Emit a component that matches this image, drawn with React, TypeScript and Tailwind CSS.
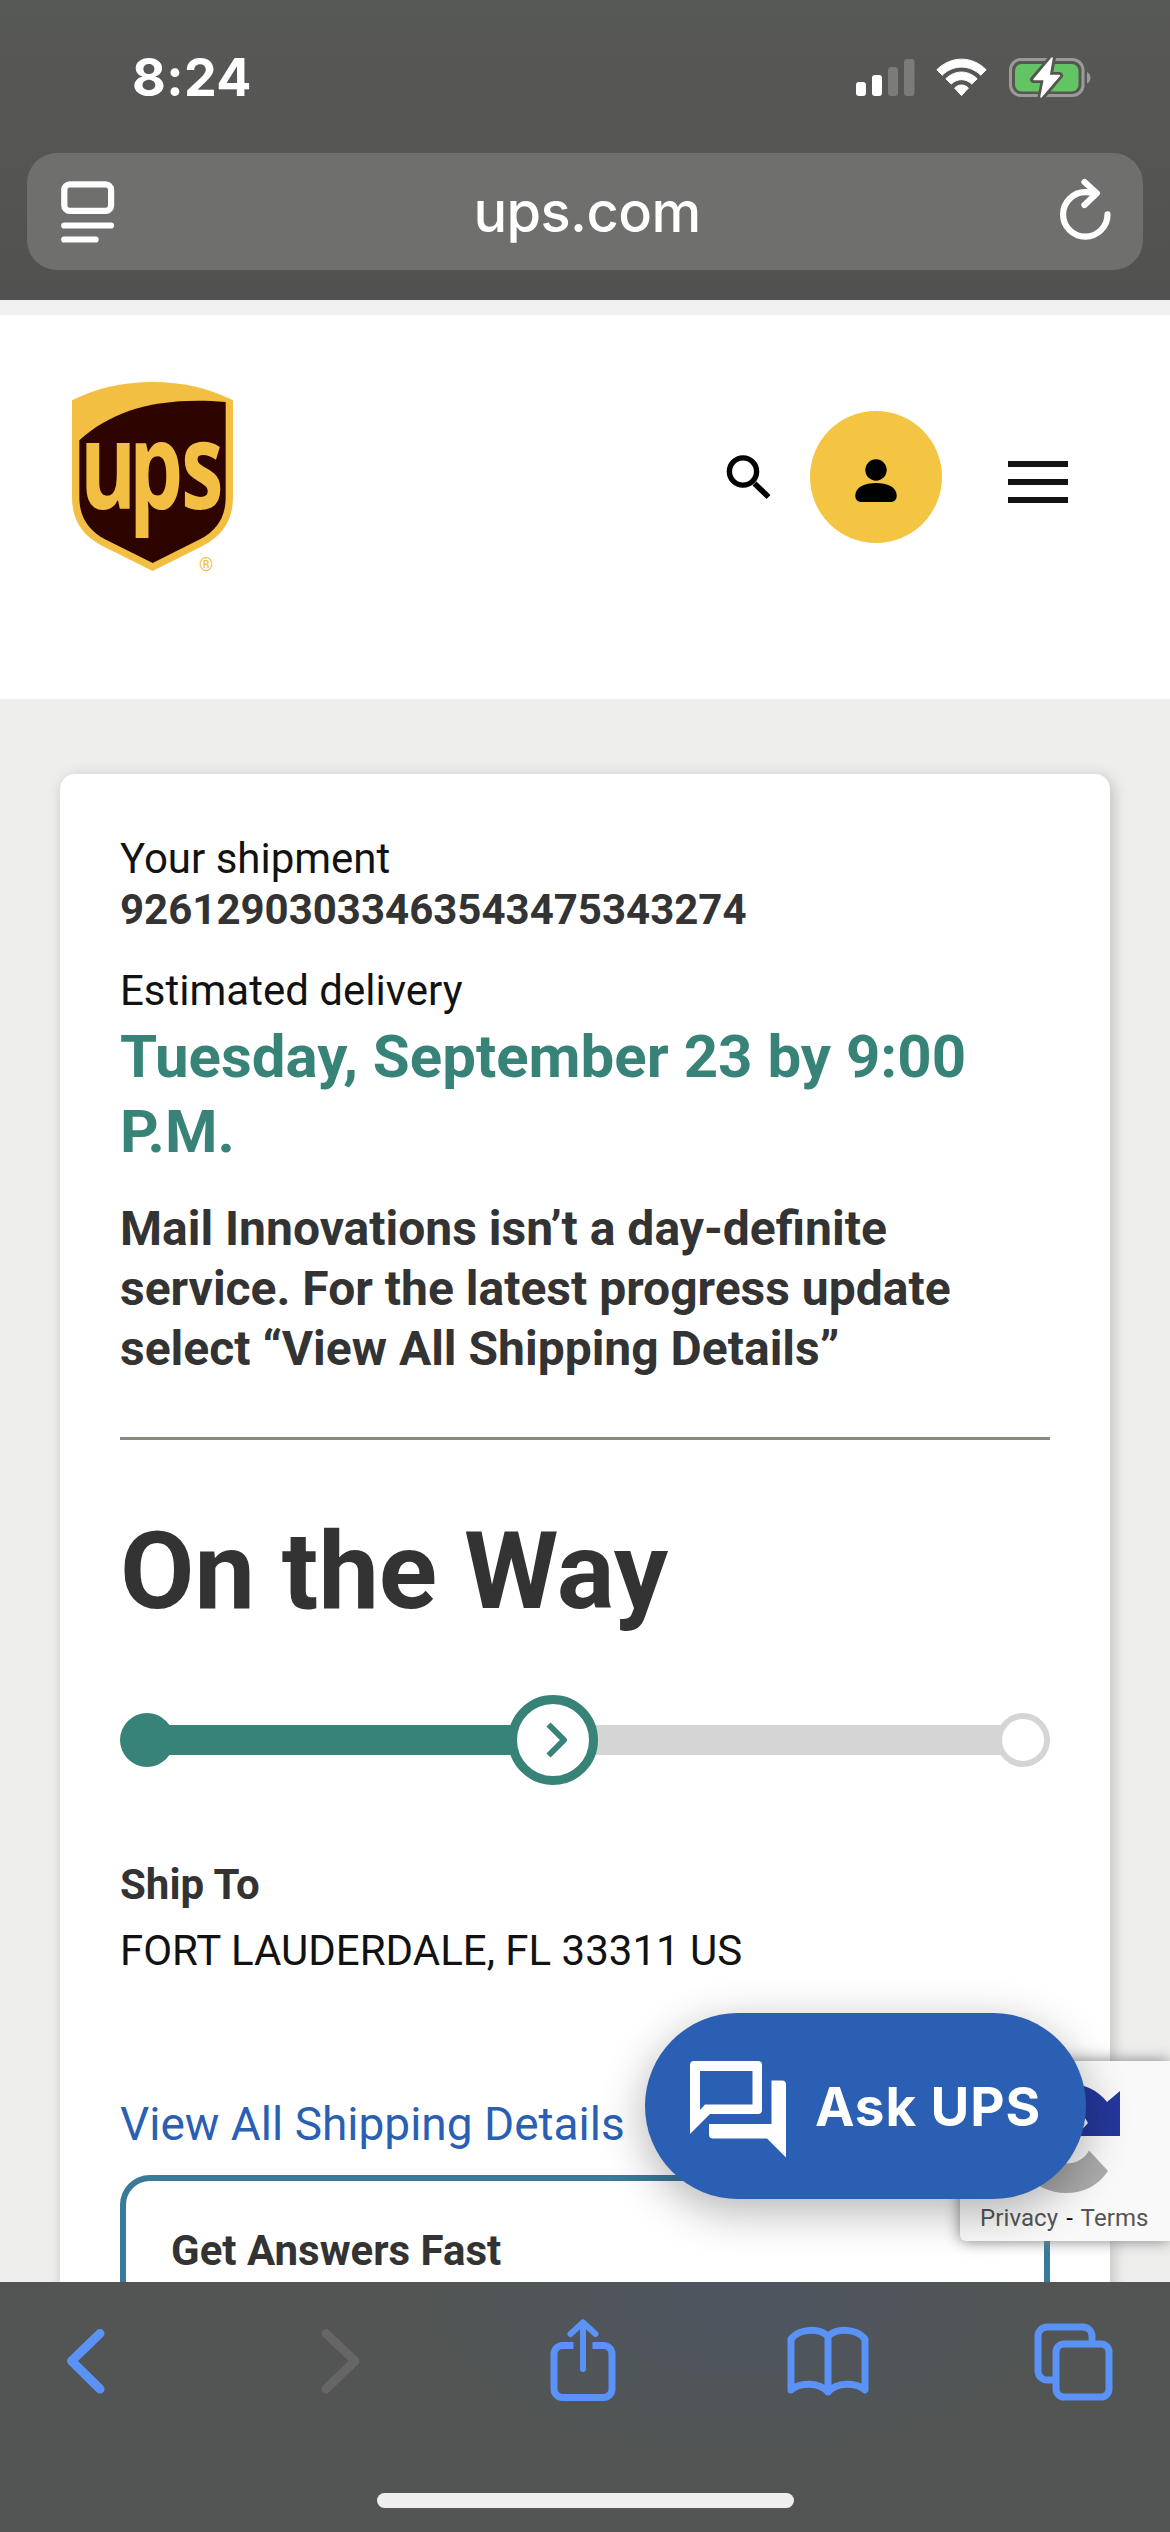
import type { ReactNode } from 'react';

/**
 * Cellular, wifi and battery indicators
 */
function StatusIcons() {
  return (
    <svg className="h-[44px] w-[236px]" viewBox="856 56 236 44" fill="none">
      <rect x="856" y="82" width="10" height="14" rx="3" fill="#fff" />
      <rect x="872" y="75" width="10" height="21" rx="3" fill="#fff" />
      <rect x="888" y="67" width="10" height="29" rx="3" fill="#7b7b7a" />
      <rect x="904" y="59" width="10.5" height="37" rx="3" fill="#7b7b7a" />

      <path d="M936.8 69.8C951 55.6 972.2 55.6 986.2 69.8L980.8 75.2C969.6 64.4 953.4 64.4 942.2 75.2Z" fill="#fff" stroke="#fff" strokeWidth="1" strokeLinejoin="round" />
      <path d="M945.8 78.8C955 69.8 968 69.8 977.2 78.8L971.8 84C965.6 78.2 957.4 78.2 951.2 84Z" fill="#fff" stroke="#fff" strokeWidth="1" strokeLinejoin="round" />
      <path d="M954.6 88C958.6 84 964.4 84 968.4 88L961.5 95.6Z" fill="#fff" stroke="#fff" strokeWidth="1" strokeLinejoin="round" />

      <rect x="1010.5" y="59.5" width="72.5" height="36" rx="10.5" stroke="#9b9a99" strokeWidth="3" />
      <rect x="1015" y="64" width="63.5" height="27.5" rx="6.5" fill="#62c462" />
      <path d="M1087 72a6.5 6.5 0 0 1 0 11.5z" fill="#9b9a99" />
      <path d="M1052.5 57.5L1033.5 79.5H1044.5L1041 97.5L1059.5 75.5H1049Z" fill="#fff" stroke="#555553" strokeWidth="7" strokeLinejoin="round" />
      <path d="M1052 58L1034 79.5H1044.5L1041 97L1059.5 75.5H1049Z" fill="#fff" stroke="#fff" strokeWidth="1.5" strokeLinejoin="round" />
    </svg>
  );
}

function BrowserHeader() {
  return (
    <header className="flex h-[300px] shrink-0 flex-col bg-linear-to-b from-[#575956] via-[#555553] to-[#51514f]">
      <div className="flex h-[153px] items-center justify-between pt-[2px] pr-[78px] pl-[132px]">
        <span className="text-[52px] leading-[60px] font-bold tracking-[0.4px] text-white">8:24</span>
        <StatusIcons />
      </div>
      <div className="mx-[27px] flex h-[117px] items-center justify-between rounded-[30px] bg-[#6f6f6d] pr-[32px] pl-[34px]">
        <svg className="h-[62px] w-[54px]" viewBox="0 0 54 62" fill="none" stroke="#fff" strokeWidth="6.2" strokeLinecap="round">
          <rect x="3.3" y="3.3" width="46.8" height="26.6" rx="5.5" />
          <path d="M3.2 44.5h46.8M3.2 58.5h31.4" />
        </svg>
        <span className="text-[56px] leading-[60px] font-medium tracking-[-0.6px] text-white">ups.com</span>
        <svg className="mb-[6px] h-[62px] w-[52px]" viewBox="0 0 52 62" fill="none" stroke="#fff" strokeWidth="6.2" strokeLinecap="round" strokeLinejoin="round">
          <path d="M36 15.2C34 14.600 29 14.200 26.300 14.200A22.200 22.200 0 1 0 48.500 36.400" />
          <path d="M25.500 4L37.800 15.200L25.500 27" />
        </svg>
      </div>
    </header>
  );
}

function UpsLogo() {
  return (
    <svg className="h-[194px] w-[161px] overflow-visible" viewBox="66 66 483 582">
      <path d="M66 121C140 84 220 66 308 66S475 84 549 121V412C549 478 520 524 462 556L308 633L153 556C95 524 66 478 66 412Z" fill="#f2bf42" />
      <path d="M88 241C190 148 330 110 527 126V412C527 470 502 510 450 538L308 609L165 538C114 510 88 470 88 412Z" fill="#2e0400" />
      <text
        transform="scale(0.71 1)"
        x="127 334 554"
        y="446"
        fill="#f2bf42"
        fontFamily="'Open Sans', sans-serif"
        fontWeight="700"
        fontSize="362"
      >
        ups
      </text>
      <text x="447" y="634" fill="#f2bf42" fontFamily="Roboto, sans-serif" fontSize="54">®</text>
    </svg>
  );
}

function SiteHeader() {
  return (
    <div className="flex h-[384px] items-start justify-between bg-white pt-[67px] pr-[102px] pl-[72px]">
      <UpsLogo />
      <div className="flex items-center pt-[29px]">
        <svg className="mr-[38px] h-[46px] w-[46px]" viewBox="0 0 46 46" fill="none" stroke="#000">
          <circle cx="17" cy="17.500" r="13.600" strokeWidth="5.400" />
          <path d="M28.500 29.500L42.500 43" strokeWidth="5.600" />
        </svg>
        <div className="flex h-[132px] w-[132px] items-center justify-center rounded-full bg-[#f4c543]">
          <svg className="mt-[7px] h-[43px] w-[42px]" viewBox="0 0 42 43">
            <circle cx="21" cy="11" r="10.700" />
            <path d="M0.300 36.500C0.300 28 10 24 21 24S41.700 28 41.700 36.500C41.700 40.500 39.500 43 35.500 43H6.500C2.500 43 0.300 40.500 0.300 36.500Z" />
          </svg>
        </div>
        <div className="mt-[10px] ml-[66px] flex w-[60px] flex-col gap-3">
          <span className="h-1.5 bg-[#121212]" />
          <span className="h-1.5 bg-[#121212]" />
          <span className="h-1.5 bg-[#121212]" />
        </div>
      </div>
    </div>
  );
}

/**
 * Shipment progress: done, current and remaining steps
 */
function ProgressTrack() {
  return (
    <div className="mt-[59px] flex h-[90px] items-center">
      <div className="z-10 h-[54px] w-[54px] rounded-full bg-[#388378]" />
      <div className="-mx-2 h-[30px] w-[350px] bg-[#388378]" />
      <div className="z-10 flex h-[90px] w-[90px] items-center justify-center rounded-full border-9 border-[#388378] bg-white">
        <svg className="ml-[7px] h-[36px] w-[22px]" viewBox="0 0 22 36" fill="none" stroke="#388378" strokeWidth="6" strokeLinejoin="round">
          <path d="M2.500 2.500L18 18L2.500 33.500" />
        </svg>
      </div>
      <div className="-mx-3 h-[30px] flex-1 bg-[#d5d5d5]" />
      <div className="z-10 h-[54px] w-[54px] rounded-full border-6 border-[#d5d5d5] bg-white" />
    </div>
  );
}

function ShipmentCard() {
  return (
    <section className="mx-[60px] mt-[75px] h-[1700px] rounded-[15px] bg-white px-[60px] pt-[59px] text-[42px] text-[#121212] shadow-[3px_3px_15px_rgba(0,0,0,0.2)]">
      <p className="leading-[51px]">Your shipment</p>
      <p className="leading-[51px] font-bold text-[#333]">92612903033463543475343274</p>

      <p className="mt-[30px] leading-[51px]">Estimated delivery</p>
      <p className="mt-[3px] text-[60px] leading-[75px] font-bold text-[#388378]">Tuesday, September 23 by 9:00 P.M.</p>
      <p className="mt-[30px] text-[48px] leading-[60px] font-bold text-[#333]">
        Mail Innovations isn’t a day-definite service. For the latest progress update select “View All Shipping Details”
      </p>

      <hr className="mt-[58px] h-[3px] border-0 bg-[#89897d]" />

      <h1 className="mt-[66px] text-[108px] leading-[130px] font-bold text-[#333]">On the Way</h1>
      <ProgressTrack />

      <p className="mt-[67px] leading-[66px] font-bold text-[#333]">Ship To</p>
      <p className="leading-[66px]">FORT LAUDERDALE, FL 33311 US</p>
      <a className="mt-[110px] block text-[46px] leading-[60px] text-[#2a5fb4]">View All Shipping Details</a>

      <div className="mt-[21px] h-[300px] rounded-[30px] border-6 border-[#397a98] pt-[44px] pl-[45px]">
        <h2 className="leading-[51px] font-bold text-[#333]">Get Answers Fast</h2>
      </div>
    </section>
  );
}

function RecaptchaBadge() {
  return (
    <div className="absolute top-[1761px] right-0 flex h-[180px] w-[210px] flex-col rounded-l-[6px] bg-[#f9f9f9] shadow-[0_0_15px_gray]">
      <svg className="ml-[58px] h-[135px] w-[110px] shrink-0" viewBox="1018 2061 110 135">
        <path d="M1070 2084C1084 2084 1098 2090 1107 2102L1120 2091V2136H1076L1088 2123C1084 2115 1078 2110 1070 2110Z" fill="#25379b" />
        <path d="M1089 2150.500L1108 2171C1098 2186 1083 2193 1066 2193C1050 2193 1034 2186 1024 2172L1043 2152C1053 2167 1080 2168 1089 2150.500Z" fill="#ababab" />
      </svg>
      <p className="pl-[20px] text-[24px] leading-[45px] tracking-[0.100px] whitespace-pre text-[#555]">
        Privacy <span className="mx-[2px] text-black">-</span> Terms
      </p>
    </div>
  );
}

function AskButton() {
  return (
    <button className="absolute top-[1713px] left-[645px] flex h-[186px] w-[441px] items-center rounded-full bg-[#2a5fb4] pl-[45px] shadow-[0_12px_45px_rgba(0,0,0,0.3)]">
      <svg className="mt-[6px] h-[97px] w-[96px]" viewBox="0 0 96 97" fill="#fff">
        <path fillRule="evenodd" d="M4 0H68a4 4 0 0 1 4 4V49a4 4 0 0 1-4 4H20L0 73V4a4 4 0 0 1 4-4ZM10 10V49L15 43.500H62.500V10Z" />
        <path d="M81.500 19.500H92a4 4 0 0 1 4 4V96.500L77 77.500H23a4 4 0 0 1-4-4V63H81.500Z" />
      </svg>
      <span className="mt-[2px] ml-[29px] font-['Inter',sans-serif] text-[53px] leading-[60px] font-bold tracking-[0.9px] whitespace-nowrap text-white">
        Ask UPS
      </span>
    </button>
  );
}

function ToolbarIcon({ children }: { children: ReactNode }) {
  return (
    <svg className="h-[90px] w-[90px]" viewBox="0 0 90 90" fill="none" stroke="#5b92f8" strokeWidth="7" strokeLinecap="round" strokeLinejoin="round">
      {children}
    </svg>
  );
}

function BrowserToolbar() {
  return (
    <footer className="flex h-[250px] shrink-0 flex-col items-center bg-[#525553] bg-[radial-gradient(ellipse_340px_170px_at_740px_20px,#4d5560,#525553)]">
      <nav className="mt-[34px] flex w-full justify-between pr-[55px] pl-[40px]">
        <ToolbarIcon>
          <path d="M60 17.500L31.500 45L60 73" strokeWidth="9" />
        </ToolbarIcon>
        <ToolbarIcon>
          <path d="M40 17.500L69 45L40 73" stroke="#656665" strokeWidth="9" />
        </ToolbarIcon>
        <ToolbarIcon>
          <path d="M50 6.500V53M37.500 18L50 6.500L62.500 18" strokeWidth="6" />
          <path d="M40.500 29.500H29.500a8.500 8.500 0 0 0-8.500 8.500V73a8.500 8.500 0 0 0 8.500 8.500H70.500a8.500 8.500 0 0 0 8.500-8.500V38a8.500 8.500 0 0 0-8.500-8.500H59.500" strokeLinecap="butt" />
        </ToolbarIcon>
        <ToolbarIcon>
          <path d="M49 20C40 12 21 12 12 23V74C21 66 40 66 49 76C58 66 77 66 86 74V23C77 12 58 12 49 20V76" />
        </ToolbarIcon>
        <ToolbarIcon>
          <path d="M67 27V20a9 9 0 0 0-9-9H22a9 9 0 0 0-9 9V55a9 9 0 0 0 9 9H30" strokeLinecap="butt" />
          <rect x="31" y="28" width="53" height="53" rx="8" />
        </ToolbarIcon>
      </nav>
      <div className="mt-[87px] h-[15px] w-[417px] rounded-full bg-[#eee]" />
    </footer>
  );
}

export default function App() {
  return (
    <div className="flex h-[2532px] w-[1170px] flex-col overflow-hidden bg-white font-['Inter',sans-serif]">
      <BrowserHeader />
      <main className="relative flex-1 overflow-hidden bg-[#eeeeed] font-['Roboto',sans-serif]">
        <div className="h-[15px] bg-[#f0f0f0]" />
        <SiteHeader />
        <ShipmentCard />
        <RecaptchaBadge />
        <AskButton />
      </main>
      <BrowserToolbar />
    </div>
  );
}
